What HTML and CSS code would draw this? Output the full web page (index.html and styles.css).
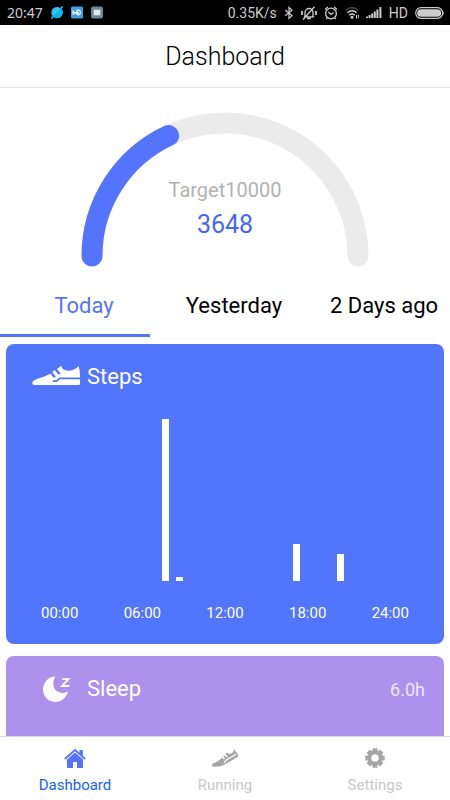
FILE: index.html
```html
<!DOCTYPE html>
<html lang="en">
<head>
    <meta charset="utf-8">
    <meta name="viewport" content="width=device-width, initial-scale=1.0">
    <title>Dashboard</title>
    <link rel="stylesheet" href="styles.css">
</head>
<body>
    <div class="status">
        <div class="status-group">
            <span class="clock">20:47</span>
            <svg width="12" height="13" viewBox="0 0 12 13"><circle cx="6" cy="6.5" r="5.6" fill="#28c8f5"/><path d="M.5 12.500 2 10.500M10 2.500 11.500.5" stroke="#28c8f5" stroke-width="1.6"/><path d="M1.5 10 10 2.5A5.6 5.6 0 0 1 4 11.7z" fill="#12b4ea"/></svg>
            <svg width="12" height="13" viewBox="0 0 12 13"><rect y=".5" width="12" height="12" rx="1.5" fill="#3da0dc"/><path d="M2 9V5l2 2.6L6 5v4M5.5 4h2a2.6 2.6 0 0 1 0 5H7.2V6" fill="none" stroke="#fff" stroke-width="1.1"/></svg>
            <svg width="12" height="13" viewBox="0 0 12 13"><rect y=".5" width="12" height="12" rx="2" fill="#708696"/><rect x="2.7" y="3.7" width="6.6" height="5.6" fill="#e4e8eb"/></svg>
        </div>
        <div class="status-group right">
            <span>0.35K/s</span>
            <svg width="10" height="14" viewBox="0 0 10 14" fill="none" stroke="#ccc" stroke-width="1.2"><path d="M1.2 4 8 9.6 5 12.4V1.4L8 4.2 1.2 9.8"/></svg>
            <svg width="16" height="14" viewBox="0 0 16 14" fill="none" stroke="#ccc" stroke-width="1.3"><path d="M4 10.500V6.500a4 4 0 0 1 8 0v4M2.800 10.800h10.400M6.700 11v1.700h2.500V11M2 13.500 13.500.7"/><path d="M1 5v4M15 5v4" stroke-width="1.800"/></svg>
            <svg width="14" height="14" viewBox="0 0 14 14" fill="none" stroke="#ccc" stroke-width="1.3"><circle cx="7" cy="7.5" r="5.4"/><path d="M4.4 6 7 8.5 9.6 6.6M1 3.6 3.8 1M10.2 1 13 3.6M3.2 12l-1 1.2M10.8 12l1 1.2"/></svg>
            <svg width="14" height="12" viewBox="0 0 14 12" fill="none" stroke="#ccc" stroke-width="1.5"><path d="M.7 3.2a9 9 0 0 1 12.6 0" stroke="#444"/><path d="M2.4 5.7a6.5 6.5 0 0 1 9.2 0M4.3 8.1a3.8 3.8 0 0 1 5.4 0"/><circle cx="7" cy="10.3" r=".8" fill="#ccc"/><path d="M11.5 8v3.4M13.3 8v3.4" stroke-width="1"/></svg>
            <svg width="16" height="11" viewBox="0 0 16 11" stroke="#ccc" stroke-width="2"><path d="M1 11V9.500M3.600 11V8M6.200 11V6.500M8.800 11V4.500M11.400 11V2.500M14.400 11V0"/></svg>
            <span>HD</span>
            <svg width="30" height="12" viewBox="0 0 30 12"><rect x=".7" y=".7" width="27" height="10.600" rx="5.300" fill="none" stroke="#ccc" stroke-width="1.200"/><rect x="2.200" y="2.200" width="24" height="7.600" rx="3.800" fill="#ccc"/><path d="M28.300 3.500q1.700 2.500 0 5" fill="#ccc"/></svg>
        </div>
    </div>

    <header class="header">
        <h1>Dashboard</h1>
    </header>

    <main class="content">
        <section class="gauge">
            <svg width="290" height="158" viewBox="0 0 290 158" fill="none" stroke-width="21" stroke-linecap="round">
                <path d="M12 146a133 133 0 0 1 266 0" stroke="#ebebeb"/>
                <path d="M12 146A133 133 0 0 1 88.600 25.600" stroke="#5474fd"/>
            </svg>
            <div class="gauge-text">
                <span class="target">Target10000</span>
                <span class="count">3648</span>
            </div>
        </section>

        <div class="days">
            <button class="day active">Today</button>
            <button class="day">Yesterday</button>
            <button class="day">2 Days ago</button>
        </div>

        <section class="card steps">
            <div class="card-head">
                <svg width="50" height="24" viewBox="0 0 50 24"><path d="M1.500 17.500C2 15 7 13.800 11 12.300c3.500-1.300 6-2 8.300-3.800l3.400 4.200 2.300-.8-3.700-5 2.300-1.800 4 4.700 2-1.200-3.600-4.600L30.300.7c.4 2.600 2.200 4.300 5.200 4.900 4.500.8 8.500-1.100 12.300-4.300C49 6 49.200 12 49 18.500c0 1-.6 1.500-1.700 1.500H4c-2.200 0-3-.8-2.500-2.500z" fill="#fff"/><path d="M21.800 16.200h3.700l3.200-2.900H49" fill="none" stroke="#5276fb" stroke-width="1.700"/></svg>
                <h2>Steps</h2>
            </div>
            <div class="bars">
                <i class="bar hour-8"></i>
                <i class="bar hour-9"></i>
                <i class="bar hour-17"></i>
                <i class="bar hour-20"></i>
            </div>
            <div class="hours">
                <span>00:00</span>
                <span>06:00</span>
                <span>12:00</span>
                <span>18:00</span>
                <span>24:00</span>
            </div>
        </section>

        <section class="card sleep">
            <div class="card-head">
                <svg width="50" height="28" viewBox="0 0 50 28"><path d="M24.500 1.500C21.500 6 21.500 12 25 15.500c3.300 3 8 3.200 12 1C35.500 22.500 30.500 27 24.500 27 17.500 27 12 21.500 12 14.500 12 7.200 17.500 1.500 24.500 1.500z" fill="#fff"/><path d="M31 4.200h6.500L31 11h7.500" fill="none" stroke="#fff" stroke-width="1.800"/></svg>
                <h2>Sleep</h2>
                <span class="hours-slept">6.0h</span>
            </div>
        </section>
    </main>

    <nav class="tabbar">
        <a class="tab active" href="#dashboard">
            <svg width="24" height="22" viewBox="0 0 24 22" fill="#5474fd"><path d="M12 5.500 20 12.500V20q0 1-1 1h-5v-6h-4v6H5q-1 0-1-1v-7.500z"/><path d="M1.800 12 12 3l10.200 9" fill="none" stroke="#5474fd" stroke-width="1.800"/><path d="M16.500 3h3.300v6.800l-3.300-3z"/></svg>
            Dashboard
        </a>
        <a class="tab" href="#running">
            <svg width="28" height="22" viewBox="0 0 28 22"><path d="M1 18.500c-.3-1.800 2-2.300 4.500-3.600 2.200-1.200 4.300-2.400 5.300-4.400l2 1.800 1.200-.8-1.800-2 1.300-1.100 2.200 1.900 1.100-.7-2-2.200.8-2c2 1.800 4.300 1.600 5.800.4 1.500-1.200 1.300-2.600 1.800-3.700l4 5.800c.5.900 0 1.500-.9 2.100l-9.800 5.900c-4 2.400-7 3.700-12.500 3.900-1.800.1-2.800-.3-3-1.300z" fill="#a6a6a6"/><path d="m13 16 2-2.700 10-6.100" fill="none" stroke="#fff" stroke-width="1.200"/></svg>
            Running
        </a>
        <a class="tab" href="#settings">
            <svg width="22" height="22" viewBox="-11 -11 22 22"><g stroke="#a6a6a6" stroke-width="5"><path d="M0-9.700V-5M0 9.700V5M-9.700 0H-5M9.700 0H5M-6.700-6.700-4-4M6.700 6.700 4 4M-6.700 6.700-4 4M6.700-6.700 4-4"/></g><circle r="5.500" fill="none" stroke="#a6a6a6" stroke-width="4"/><circle r="3.500" fill="#fff"/></svg>
            Settings
        </a>
    </nav>
</body>
</html>
```
FILE: styles.css
```css
* {
    box-sizing: border-box;
}
body {
    display: flex;
    flex-direction: column;
    height: 100vh;
    margin: 0;
    font-family: Roboto, "Liberation Sans", sans-serif;
    background-color: white;
}
h1, h2 {
    margin: 0;
}
.status {
    display: flex;
    flex: none;
    justify-content: space-between;
    height: 25px;
    padding: 0 5px 0 7px;
    font-size: 14px;
    color: #ccc;
    background-color: black;
}
.status-group {
    display: flex;
    align-items: center;
    gap: 8px;
}
.status-group.right {
    gap: 7px;
}
.clock {
    font-family: "Noto Sans", sans-serif;
}
.header {
    flex: none;
    padding: 16px 0 14px;
    border-bottom: 1px solid #e2e2e2;
    text-align: center;
}
.header h1 {
    font-size: 25px;
    line-height: 32px;
    font-weight: 300;
}
.content {
    flex: 1;
    min-height: 0;
    overflow-y: auto;
    scrollbar-width: none;
}
.gauge {
    display: grid;
    justify-content: center;
    padding-top: 22px;
}
.gauge svg, .gauge-text {
    grid-area: 1 / 1;
}
.gauge-text {
    display: flex;
    flex-direction: column;
    align-items: center;
    gap: 9px;
    padding-top: 68px;
}
.target {
    font-size: 20px;
    line-height: 24px;
    color: #b2b2b2;
}
.count {
    font-size: 25px;
    line-height: 28px;
    color: #4467f5;
}
.days {
    display: grid;
    grid-template-columns: repeat(3, 1fr);
    margin-top: 6px;
}
.day {
    padding: 17px 0 13px 18px;
    border: none;
    border-bottom: 3px solid transparent;
    font: 22px/30px Roboto, "Liberation Sans", sans-serif;
    white-space: nowrap;
    color: black;
    background: none;
}
.day.active {
    color: #5474fd;
    border-color: #5474fd;
}
.card {
    margin: 7px 6px 12px;
    border-radius: 8px;
    color: white;
}
.steps {
    padding-bottom: 21px;
    background-color: #5276fb;
}
.sleep {
    height: 300px;
    background-color: #ac92ec;
}
.card-head {
    display: flex;
    align-items: center;
    gap: 6px;
    padding: 17px 19px 0 25px;
}
.card-head h2 {
    font-size: 22px;
    line-height: 32px;
    font-weight: 400;
}
.hours-slept {
    margin-left: auto;
    font-size: 18px;
    color: #eee6fb;
}
.bars {
    display: grid;
    grid-template-columns: repeat(25, 1fr);
    align-items: end;
    justify-items: center;
    height: 162px;
    margin: 26px 38px 22px 35px;
}
.bar {
    grid-row: 1;
    width: 7px;
    background-color: white;
}
.hour-8 {
    grid-column: 9;
    height: 162px;
}
.hour-9 {
    grid-column: 10;
    height: 4px;
}
.hour-17 {
    grid-column: 18;
    height: 37px;
}
.hour-20 {
    grid-column: 21;
    height: 27px;
}
.hours {
    display: flex;
    justify-content: space-between;
    padding: 0 35px;
    font-size: 15px;
    line-height: 20px;
}
.tabbar {
    display: grid;
    flex: none;
    grid-template-columns: repeat(3, 1fr);
    padding: 10px 0 5px;
    border-top: 1px solid #d8d8d8;
    background-color: white;
}
.tab {
    display: flex;
    flex-direction: column;
    align-items: center;
    gap: 6px;
    font-size: 15px;
    line-height: 20px;
    text-decoration: none;
    color: #c8c8c8;
}
.tab.active {
    color: #1462f0;
}
```
